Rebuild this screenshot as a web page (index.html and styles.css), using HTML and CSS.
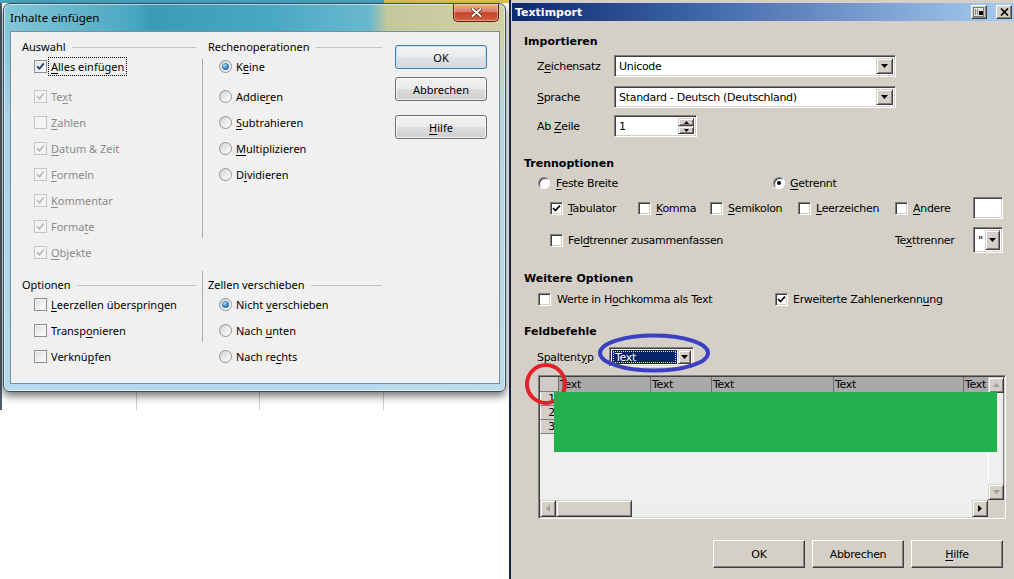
FILE: index.html
```html
<!DOCTYPE html>
<html lang="de">
<head>
<meta charset="utf-8">
<title>Inhalte einfügen / Textimport</title>
<link rel="stylesheet" href="styles.css">
</head>
<body>
<div class="screen">
  <div class="left-pane">
    <div class="aero">
      <div class="aero-title">
        <span class="aero-caption">Inhalte einfügen</span>
        <div class="aero-close"><svg width="11" height="9" viewBox="0 0 11 9"><path d="M1.5 1 L9.5 8 M9.5 1 L1.5 8" stroke="#5b1b10" stroke-width="3.4" stroke-linecap="round"/><path d="M1.5 1 L9.5 8 M9.5 1 L1.5 8" stroke="#ffffff" stroke-width="2" stroke-linecap="round"/></svg></div>
      </div>
      <div class="aero-client">
        <div class="pe-section">
          <div class="pe-group">
            <div class="pe-legend"><span>Auswahl</span><i></i></div>
            <div class="w7-item first"><span class="w7-check"><svg width="9" height="9" viewBox="0 0 9 9"><path d="M1.2 4.3 L3.5 6.8 L7.8 1.4" fill="none" stroke="#23377c" stroke-width="1.7"/></svg></span><span class="focus"><u>A</u>lles einfügen</span></div>
            <div class="w7-item second dis"><span class="w7-check"><svg width="9" height="9" viewBox="0 0 9 9"><path d="M1.2 4.3 L3.5 6.8 L7.8 1.4" fill="none" stroke="#b4b4b4" stroke-width="1.5"/></svg></span><span>Te<u>x</u>t</span></div>
            <div class="w7-item dis"><span class="w7-check"></span><span><u>Z</u>ahlen</span></div>
            <div class="w7-item dis"><span class="w7-check"><svg width="9" height="9" viewBox="0 0 9 9"><path d="M1.2 4.3 L3.5 6.8 L7.8 1.4" fill="none" stroke="#b4b4b4" stroke-width="1.5"/></svg></span><span><u>D</u>atum &amp; Zeit</span></div>
            <div class="w7-item dis"><span class="w7-check"><svg width="9" height="9" viewBox="0 0 9 9"><path d="M1.2 4.3 L3.5 6.8 L7.8 1.4" fill="none" stroke="#b4b4b4" stroke-width="1.5"/></svg></span><span><u>F</u>ormeln</span></div>
            <div class="w7-item dis"><span class="w7-check"><svg width="9" height="9" viewBox="0 0 9 9"><path d="M1.2 4.3 L3.5 6.8 L7.8 1.4" fill="none" stroke="#b4b4b4" stroke-width="1.5"/></svg></span><span><u>K</u>ommentar</span></div>
            <div class="w7-item dis"><span class="w7-check"><svg width="9" height="9" viewBox="0 0 9 9"><path d="M1.2 4.3 L3.5 6.8 L7.8 1.4" fill="none" stroke="#b4b4b4" stroke-width="1.5"/></svg></span><span>Forma<u>t</u>e</span></div>
            <div class="w7-item dis"><span class="w7-check"><svg width="9" height="9" viewBox="0 0 9 9"><path d="M1.2 4.3 L3.5 6.8 L7.8 1.4" fill="none" stroke="#b4b4b4" stroke-width="1.5"/></svg></span><span><u>O</u>bjekte</span></div>
          </div>
          <div class="pe-sep top"></div>
          <div class="pe-group">
            <div class="pe-legend"><span>Rechenoperationen</span><i></i></div>
            <div class="w7-item radio first"><span class="w7-radio on"></span><span>K<u>e</u>ine</span></div>
            <div class="w7-item radio second"><span class="w7-radio"></span><span>Addie<u>r</u>en</span></div>
            <div class="w7-item radio"><span class="w7-radio"></span><span><u>S</u>ubtrahieren</span></div>
            <div class="w7-item radio"><span class="w7-radio"></span><span><u>M</u>ultiplizieren</span></div>
            <div class="w7-item radio"><span class="w7-radio"></span><span>D<u>i</u>vidieren</span></div>
          </div>
          <div class="pe-buttons">
            <div class="w7-btn default">OK</div>
            <div class="w7-btn b2">Abbrechen</div>
            <div class="w7-btn b3"><span><u>H</u>ilfe</span></div>
          </div>
        </div>
        <div class="pe-section bottom">
          <div class="pe-group">
            <div class="pe-legend"><span>Optionen</span><i></i></div>
            <div class="w7-item first"><span class="w7-check"></span><span><u>L</u>eerzellen überspringen</span></div>
            <div class="w7-item"><span class="w7-check"></span><span>Transp<u>o</u>nieren</span></div>
            <div class="w7-item"><span class="w7-check"></span><span>Verknü<u>p</u>fen</span></div>
          </div>
          <div class="pe-sep low"></div>
          <div class="pe-group">
            <div class="pe-legend"><span>Zellen verschieben</span><i></i></div>
            <div class="w7-item radio first"><span class="w7-radio on"></span><span>Nicht <u>v</u>erschieben</span></div>
            <div class="w7-item radio"><span class="w7-radio"></span><span>Nach <u>u</u>nten</span></div>
            <div class="w7-item radio"><span class="w7-radio"></span><span>Nach re<u>c</u>hts</span></div>
          </div>
        </div>
      </div>
    </div>
  </div>

  <div class="right-pane">
    <div class="c-title">
      <span class="c-caption">Textimport</span>
      <span class="c-tbtn restore"><svg width="12" height="10" viewBox="0 0 12 10"><rect x="0.5" y="0.5" width="10" height="9" fill="#e4e2dc" stroke="#7a7a7a"/><path d="M2.5 2 V8 M4.5 2 V8" stroke="#8a8a8a"/><rect x="6" y="4" width="4" height="4" fill="#000"/></svg></span>
      <span class="c-tbtn close"><svg width="9" height="8" viewBox="0 0 9 8"><path d="M1 0.5 L8 7.5 M8 0.5 L1 7.5" stroke="#000" stroke-width="1.7"/></svg></span>
    </div>
    <div class="c-body">
      <div class="c-head h-imp">Importieren</div>
      <div class="c-row r-zs">
        <span class="c-label">Z<u>e</u>ichensatz</span>
        <div class="c-field c-combo w-wide"><span class="c-val">Unicode</span><span class="c-drop"><svg width="7" height="4" viewBox="0 0 7 4"><path d="M0 0H7L3.5 4Z"/></svg></span></div>
      </div>
      <div class="c-row r-sp">
        <span class="c-label"><u>S</u>prache</span>
        <div class="c-field c-combo w-wide"><span class="c-val">Standard - Deutsch (Deutschland)</span><span class="c-drop"><svg width="7" height="4" viewBox="0 0 7 4"><path d="M0 0H7L3.5 4Z"/></svg></span></div>
      </div>
      <div class="c-row r-ab">
        <span class="c-label">Ab <u>Z</u>eile</span>
        <div class="c-field c-spin"><span class="c-val">1</span><span class="spin-btns"><span class="spin-b"><svg width="5" height="3" viewBox="0 0 5 3"><path d="M0 3H5L2.5 0Z"/></svg></span><span class="spin-b"><svg width="5" height="3" viewBox="0 0 5 3"><path d="M0 0H5L2.5 3Z"/></svg></span></span></div>
      </div>

      <div class="c-head h-tr">Trennoptionen</div>
      <div class="c-row r-fest">
        <div class="c-item w-fest"><span class="c-radio"></span><span><u>F</u>este Breite</span></div>
        <div class="c-item"><span class="c-radio on"></span><span><u>G</u>etrennt</span></div>
      </div>
      <div class="c-row r-tab">
        <div class="c-item w-tab"><span class="c-check"><svg width="9" height="9" viewBox="0 0 9 9"><path d="M1 4 L3.4 6.6 L8 1.6" fill="none" stroke="#000" stroke-width="1.7"/></svg></span><span><u>T</u>abulator</span></div>
        <div class="c-item w-komma"><span class="c-check"></span><span><u>K</u>omma</span></div>
        <div class="c-item w-semi"><span class="c-check"></span><span><u>S</u>emikolon</span></div>
        <div class="c-item w-leer"><span class="c-check"></span><span><u>L</u>eerzeichen</span></div>
        <div class="c-item w-andere"><span class="c-check"></span><span><u>A</u>ndere</span></div>
        <div class="c-field c-input"></div>
      </div>
      <div class="c-row r-feld">
        <div class="c-item w-feld"><span class="c-check"></span><span>Fel<u>d</u>trenner zusammenfassen</span></div>
        <span class="c-label w-tt">Te<u>x</u>ttrenner</span>
        <div class="c-field c-combo c-small"><span class="c-val">"</span><span class="c-drop"><svg width="7" height="4" viewBox="0 0 7 4"><path d="M0 0H7L3.5 4Z"/></svg></span></div>
      </div>

      <div class="c-head h-wo">Weitere Optionen</div>
      <div class="c-row r-werte">
        <div class="c-item w-werte"><span class="c-check"></span><span>Werte in H<u>o</u>chkomma als Text</span></div>
        <div class="c-item"><span class="c-check"><svg width="9" height="9" viewBox="0 0 9 9"><path d="M1 4 L3.4 6.6 L8 1.6" fill="none" stroke="#000" stroke-width="1.7"/></svg></span><span>Erweiterte Zahlenerkenn<u>u</u>ng</span></div>
      </div>

      <div class="c-head h-fb">Feldbefehle</div>
      <div class="c-row r-typ">
        <span class="c-label w-typ">Spaltent<u>y</u>p</span>
        <div class="c-field c-combo c-typ"><span class="c-sel"><span class="c-focus">Text</span></span><span class="c-drop"><svg width="7" height="4" viewBox="0 0 7 4"><path d="M0 0H7L3.5 4Z"/></svg></span></div>
        <svg class="blue-ring" width="114" height="40" viewBox="0 0 114 40"><ellipse cx="57" cy="20" rx="54" ry="17.5" fill="none" stroke="#3b40c2" stroke-width="4"/></svg>
      </div>

      <div class="grid-box">
        <div class="grid-main">
          <div class="grid-head">
            <span class="gh-corner"></span>
            <span class="gh-col c1">Text</span>
            <span class="gh-col c2">Text</span>
            <span class="gh-col c3">Text</span>
            <span class="gh-col c4">Text</span>
            <span class="gh-col c5">Text</span>
          </div>
          <div class="grid-row"><span class="rn">1</span></div>
          <div class="grid-row"><span class="rn">2</span></div>
          <div class="grid-row"><span class="rn">3</span></div>
        </div>
        <div class="vscroll">
          <span class="sb-btn"><svg width="7" height="4" viewBox="0 0 7 4"><path d="M0 4H7L3.5 0Z" fill="#a0a0a0"/></svg></span>
          <span class="sb-thumb-v"></span>
          <span class="sb-btn"><svg width="7" height="4" viewBox="0 0 7 4"><path d="M0 0H7L3.5 4Z" fill="#a0a0a0"/></svg></span>
        </div>
        <div class="hscroll">
          <span class="sb-btn"><svg width="4" height="7" viewBox="0 0 4 7"><path d="M4 0V7L0 3.5Z" fill="#a0a0a0"/></svg></span>
          <span class="sb-thumb-h"></span>
          <span class="sb-track"></span>
          <span class="sb-btn"><svg width="4" height="7" viewBox="0 0 4 7"><path d="M0 0V7L4 3.5Z" fill="#000"/></svg></span>
        </div>
        <div class="sb-corner"></div>
        <svg class="red-ring" width="48" height="48" viewBox="0 0 48 48"><circle cx="24" cy="24" r="19" fill="none" stroke="#e3222b" stroke-width="4"/></svg>
        <div class="green-mask"></div>
      </div>

      <div class="c-buttons">
        <div class="c-btn">OK</div>
        <div class="c-btn">Abbrechen</div>
        <div class="c-btn"><span><u>H</u>ilfe</span></div>
      </div>
    </div>
  </div>
</div>
</body>
</html>
```

FILE: styles.css
```css
* { box-sizing: border-box; }
html, body { margin: 0; padding: 0; }
body { width: 1014px; height: 579px; overflow: hidden; background: #ffffff; }
u { text-decoration: underline; text-underline-offset: 2px; }
.screen { display: flex; width: 1014px; height: 579px; }

/* ---------- left: Windows 7 dialog over spreadsheet ---------- */
.left-pane {
  width: 509px; height: 579px; flex: none;
  padding: 3px 0 0 3px;
  background:
    linear-gradient(to right, #49a4be 0, #49a4be 384px, #dcc64e 384px) top left / 100% 3px no-repeat,
    linear-gradient(to right, #4f5e6a 0, #4f5e6a 2px, transparent 2px, transparent 136px, #cdcdcd 136px, #cdcdcd 137px, transparent 137px, transparent 259px, #cdcdcd 259px, #cdcdcd 260px, transparent 260px, transparent 383px, #cdcdcd 383px, #cdcdcd 384px, transparent 384px) top left / 100% 410px no-repeat,
    #ffffff;
}
.aero {
  width: 503px; height: 389px;
  display: flex; flex-direction: column;
  padding: 0 5px 7px 6px;
  border: 1px solid #35505f;
  border-radius: 7px 7px 6px 6px;
  background:
    linear-gradient(to bottom, rgba(190,222,242,0) 0, rgba(190,222,242,0) 28px, rgba(176,212,236,0.85) 110px, rgba(186,219,240,0.95) 100%),
    linear-gradient(to right, #84c7d8 0%, #64b6cb 14%, #4aa8c2 26%, #3b9cb8 29%, #48a7c2 52%, #69b9cf 73%, #c4c89d 76.5%, #d2d0a6 100%);
  box-shadow: inset 0 0 0 1px rgba(255,255,255,0.55), 0 4px 9px rgba(0,0,0,0.55);
}
.aero-title { height: 27px; flex: none; display: flex; justify-content: space-between; align-items: flex-start; }
.aero-caption { font-family: "Noto Sans", sans-serif; font-size: 11.5px; line-height: 27px; color: #000; }
.aero-close {
  width: 46px; height: 18px; margin-right: 1px;
  display: flex; align-items: center; justify-content: center;
  border: 1px solid #5e1d12; border-top: none;
  border-radius: 0 0 5px 5px;
  background: linear-gradient(#eab1a2 0%, #dc7b66 45%, #c6432c 52%, #d2603f 100%);
  box-shadow: inset 0 0 0 1px rgba(255,220,210,0.5);
}
.aero-client {
  flex: 1;
  background: #f0f0f0;
  border: 1px solid #7b8e9c;
  padding: 8px 0 0 11px;
  font-family: "Noto Sans", sans-serif; font-size: 11px; color: #000;
}
.pe-section { display: flex; align-items: flex-start; }
.pe-section.bottom { margin-top: 13px; }
.pe-group { width: 174px; flex: none; }
.pe-legend { display: flex; align-items: center; height: 14px; line-height: 14px; white-space: nowrap; }
.pe-legend i { flex: 1; height: 1px; background: #c3c3c3; margin-left: 6px; }
.pe-sep { width: 12px; flex: none; }
.pe-sep::before { content: ""; display: block; margin-left: 6px; width: 1px; background: #a9a9a9; }
.pe-sep.top::before { margin-top: 19px; height: 179px; }
.pe-sep.low::before { margin-top: -7px; height: 71px; }

.w7-item { display: flex; align-items: center; gap: 4px; height: 26px; padding-left: 12px; white-space: nowrap; }
.w7-item.radio { padding-left: 11px; }
.w7-item.first { margin-top: -1px; }
.w7-item.second { margin-top: 4px; }
.w7-item.dis { color: #8a8a8a; }
.w7-check {
  width: 13px; height: 13px; flex: none;
  display: flex; align-items: center; justify-content: center;
  border: 1px solid #8e8f8f;
  background: linear-gradient(135deg, #dcdcdc 0%, #eeeeee 50%, #ffffff 100%);
  box-shadow: inset 0 0 0 1px #f4f4f4;
}
.dis .w7-check { border-color: #c4c4c4; background: #f4f4f4; box-shadow: none; }
.focus { outline: 1px dotted #000; outline-offset: 1px; padding: 0 1px; margin-left: -1px; }
.w7-radio {
  width: 13px; height: 13px; flex: none; border-radius: 50%;
  display: flex; align-items: center; justify-content: center;
  border: 1px solid #939393;
  background: linear-gradient(135deg, #cfcfcf 0%, #ececec 55%, #ffffff 100%);
}
.w7-radio.on::after {
  content: ""; width: 7px; height: 7px; border-radius: 50%;
  background: radial-gradient(circle at 40% 35%, #a7dcfa 0, #3f8ccb 45%, #0f3f76 100%);
}
.pe-buttons { display: flex; flex-direction: column; margin-left: 13px; padding-top: 5px; }
.w7-btn {
  width: 92px; height: 24px;
  display: flex; align-items: center; justify-content: center;
  border: 1px solid #707070; border-radius: 3px;
  background: linear-gradient(#f2f2f2 0%, #ebebeb 48%, #dddddd 52%, #cfcfcf 100%);
  box-shadow: inset 0 0 0 1px rgba(255,255,255,0.7);
}
.w7-btn.default { border-color: #3c7fb1; box-shadow: inset 0 0 0 1px #c4e5f6; background: linear-gradient(#f4f4f4 0%, #ececec 48%, #dfe3e6 52%, #d4d8dc 100%); }
.w7-btn.b2 { margin-top: 8px; }
.w7-btn.b3 { margin-top: 14px; }

/* ---------- right: classic Textimport dialog ---------- */
.right-pane {
  width: 505px; height: 579px; flex: none;
  background: #d4d0c8;
  border-left: 2px solid #17233f;
  padding: 3px 0 0 1px;
  font-family: "DejaVu Sans", sans-serif; font-size: 11px; letter-spacing: -0.3px; color: #000;
}
.c-title {
  height: 18px; display: flex; align-items: center;
  padding-left: 3px;
  background: linear-gradient(to right, #0c2870 0%, #3c62a6 35%, #a9cdf0 100%);
}
.c-caption { color: #fff; font-weight: bold; letter-spacing: 0; flex: 1; }
.c-tbtn {
  width: 16px; height: 14px; flex: none;
  display: flex; align-items: center; justify-content: center;
  background: #d4d0c8;
  border: 1px solid; border-color: #fff #404040 #404040 #fff;
  box-shadow: inset -1px -1px #808080;
}
.c-tbtn.restore { margin-right: 9px; }
.c-tbtn.close { margin-right: 2px; }

.c-body { padding: 11px 0 0 12px; }
.c-head { font-weight: bold; letter-spacing: 0; height: 18px; line-height: 20px; }
.h-tr { margin-top: 17px; }
.h-wo { margin-top: 16px; }
.h-fb { margin-top: 15px; }
.c-row { display: flex; align-items: center; white-space: nowrap; }
.r-zs { height: 22px; margin-top: 5px; padding-left: 13px; }
.r-sp { height: 22px; margin-top: 9px; padding-left: 13px; }
.r-ab { height: 22px; margin-top: 7px; padding-left: 13px; }
.r-fest { height: 16px; margin-top: 3px; padding-left: 14px; }
.r-tab { height: 22px; margin-top: 6px; padding-left: 26px; }
.r-feld { height: 26px; margin-top: 8px; padding-left: 26px; }
.r-werte { height: 16px; margin-top: 4px; padding-left: 14px; }
.r-typ { height: 20px; margin-top: 7px; padding-left: 13px; position: relative; }
.c-label { width: 77px; flex: none; }
.c-label.w-tt { width: 78px; }
.c-label.w-typ { width: 72px; }

.c-field {
  flex: none; height: 100%;
  display: flex; align-items: center;
  background: #fff;
  border: 1px solid; border-color: #808080 #fff #fff #808080;
  box-shadow: inset 1px 1px #404040, inset -1px -1px #d4d0c8;
  padding: 2px;
}
.c-val { flex: 1; padding-left: 2px; overflow: hidden; }
.c-combo.w-wide { width: 282px; }
.c-drop {
  width: 17px; height: 100%; flex: none;
  display: flex; align-items: center; justify-content: center;
  background: #d4d0c8;
  border: 1px solid; border-color: #d4d0c8 #404040 #404040 #d4d0c8;
  box-shadow: inset 1px 1px #fff, inset -1px -1px #808080;
}
.c-spin { width: 83px; }
.spin-btns { width: 16px; height: 100%; display: flex; flex-direction: column; }
.spin-b {
  flex: 1; display: flex; align-items: center; justify-content: center;
  background: #d4d0c8;
  border: 1px solid; border-color: #d4d0c8 #404040 #404040 #d4d0c8;
  box-shadow: inset 1px 1px #fff, inset -1px -1px #808080;
}
.c-input { width: 30px; }
.c-small { width: 30px; }
.c-small .c-drop { width: 15px; }
.c-typ { width: 85px; }
.c-sel { flex: 1; height: 100%; background: #0a246a; color: #fff; display: flex; align-items: center; padding: 1px; margin-right: 1px; }
.c-focus { flex: 1; height: 100%; display: flex; align-items: center; padding-left: 2px; outline: 1px dotted #f0e6a0; outline-offset: -1px; }
.c-typ .c-drop { width: 13px; }
.blue-ring { position: absolute; left: 73px; top: -14px; }

.c-item { display: flex; align-items: center; gap: 5px; flex: none; }
.w-fest { width: 235px; gap: 6px; }
.w-tab { width: 88px; }
.w-komma { width: 72px; }
.w-semi { width: 88px; }
.w-leer { width: 97px; }
.w-andere { width: 78px; }
.w-feld { width: 345px; }
.w-werte { width: 237px; gap: 6px; }
.c-check {
  width: 13px; height: 13px; flex: none;
  display: flex; align-items: center; justify-content: center;
  background: #fff;
  border: 1px solid; border-color: #808080 #fff #fff #808080;
  box-shadow: inset 1px 1px #404040, inset -1px -1px #d4d0c8;
}
.c-radio {
  width: 12px; height: 12px; flex: none; border-radius: 50%;
  display: flex; align-items: center; justify-content: center;
  background: #fff;
  border: 1px solid; border-color: #808080 #fff #fff #808080;
  box-shadow: inset 1px 1px #404040;
}
.c-radio.on::after { content: ""; width: 4px; height: 4px; border-radius: 50%; background: #000; }

/* preview grid */
.grid-box {
  position: relative;
  width: 468px; height: 144px; margin: 8px 0 0 14px;
  border: 1px solid; border-color: #808080 #fff #fff #808080;
  box-shadow: inset 1px 1px #404040, inset -1px -1px #d4d0c8;
  padding: 1px;
  display: grid; grid-template-columns: 448px 16px; grid-template-rows: 123px 17px;
  background: #efefef;
}
.grid-main { background: #efefef; overflow: hidden; }
.grid-head { display: flex; height: 15px; background: #a9a9a9; }
.gh-corner { width: 19px; flex: none; background: #cfccc5; border-right: 1px solid #6e6e6e; border-bottom: 1px solid #808080; }
.gh-col { flex: none; height: 15px; line-height: 15px; padding-left: 1px; border-right: 1px solid #6e6e6e; overflow: hidden; white-space: nowrap; }
.gh-col.c1 { width: 92px; }
.gh-col.c2 { width: 61px; }
.gh-col.c3 { width: 122px; }
.gh-col.c4 { width: 130px; }
.gh-col.c5 { width: 30px; border-right: none; }
.grid-row { height: 14px; }
.rn { display: block; width: 19px; height: 14px; line-height: 13px; text-align: right; padding-right: 3px; font-size: 11px; background: #d4d0c8; border-right: 1px solid #808080; border-bottom: 1px solid #808080; border-left: 1px solid #fff; }
.vscroll { display: flex; flex-direction: column; background: #ece9e2; }
.hscroll { display: flex; background: #ece9e2; }
.sb-btn {
  width: 16px; height: 16px; flex: none;
  display: flex; align-items: center; justify-content: center;
  background: #d4d0c8;
  border: 1px solid; border-color: #d4d0c8 #404040 #404040 #d4d0c8;
  box-shadow: inset 1px 1px #fff, inset -1px -1px #808080;
}
.hscroll .sb-btn { height: 17px; }
.sb-thumb-v { flex: 1; background: #efefef; border-left: 1px solid #fff; border-right: 1px solid #808080; }
.sb-thumb-h {
  width: 76px; flex: none;
  background: #d4d0c8;
  border: 1px solid; border-color: #d4d0c8 #404040 #404040 #d4d0c8;
  box-shadow: inset 1px 1px #fff, inset -1px -1px #808080;
}
.sb-track { flex: 1; background: #eeeeec; }
.sb-corner { background: #d4d0c8; }
.red-ring { position: absolute; left: -17px; top: -16px; z-index: 1; }
.green-mask { position: absolute; left: 15px; top: 16px; width: 443px; height: 60px; background: #22b14c; z-index: 2; }

.c-buttons { display: flex; gap: 7px; margin: 21px 0 0 189px; }
.c-btn {
  width: 92px; height: 28px;
  display: flex; align-items: center; justify-content: center;
  background: #d4d0c8;
  border: 1px solid; border-color: #fff #404040 #404040 #fff;
  box-shadow: inset -1px -1px #808080;
}
```
